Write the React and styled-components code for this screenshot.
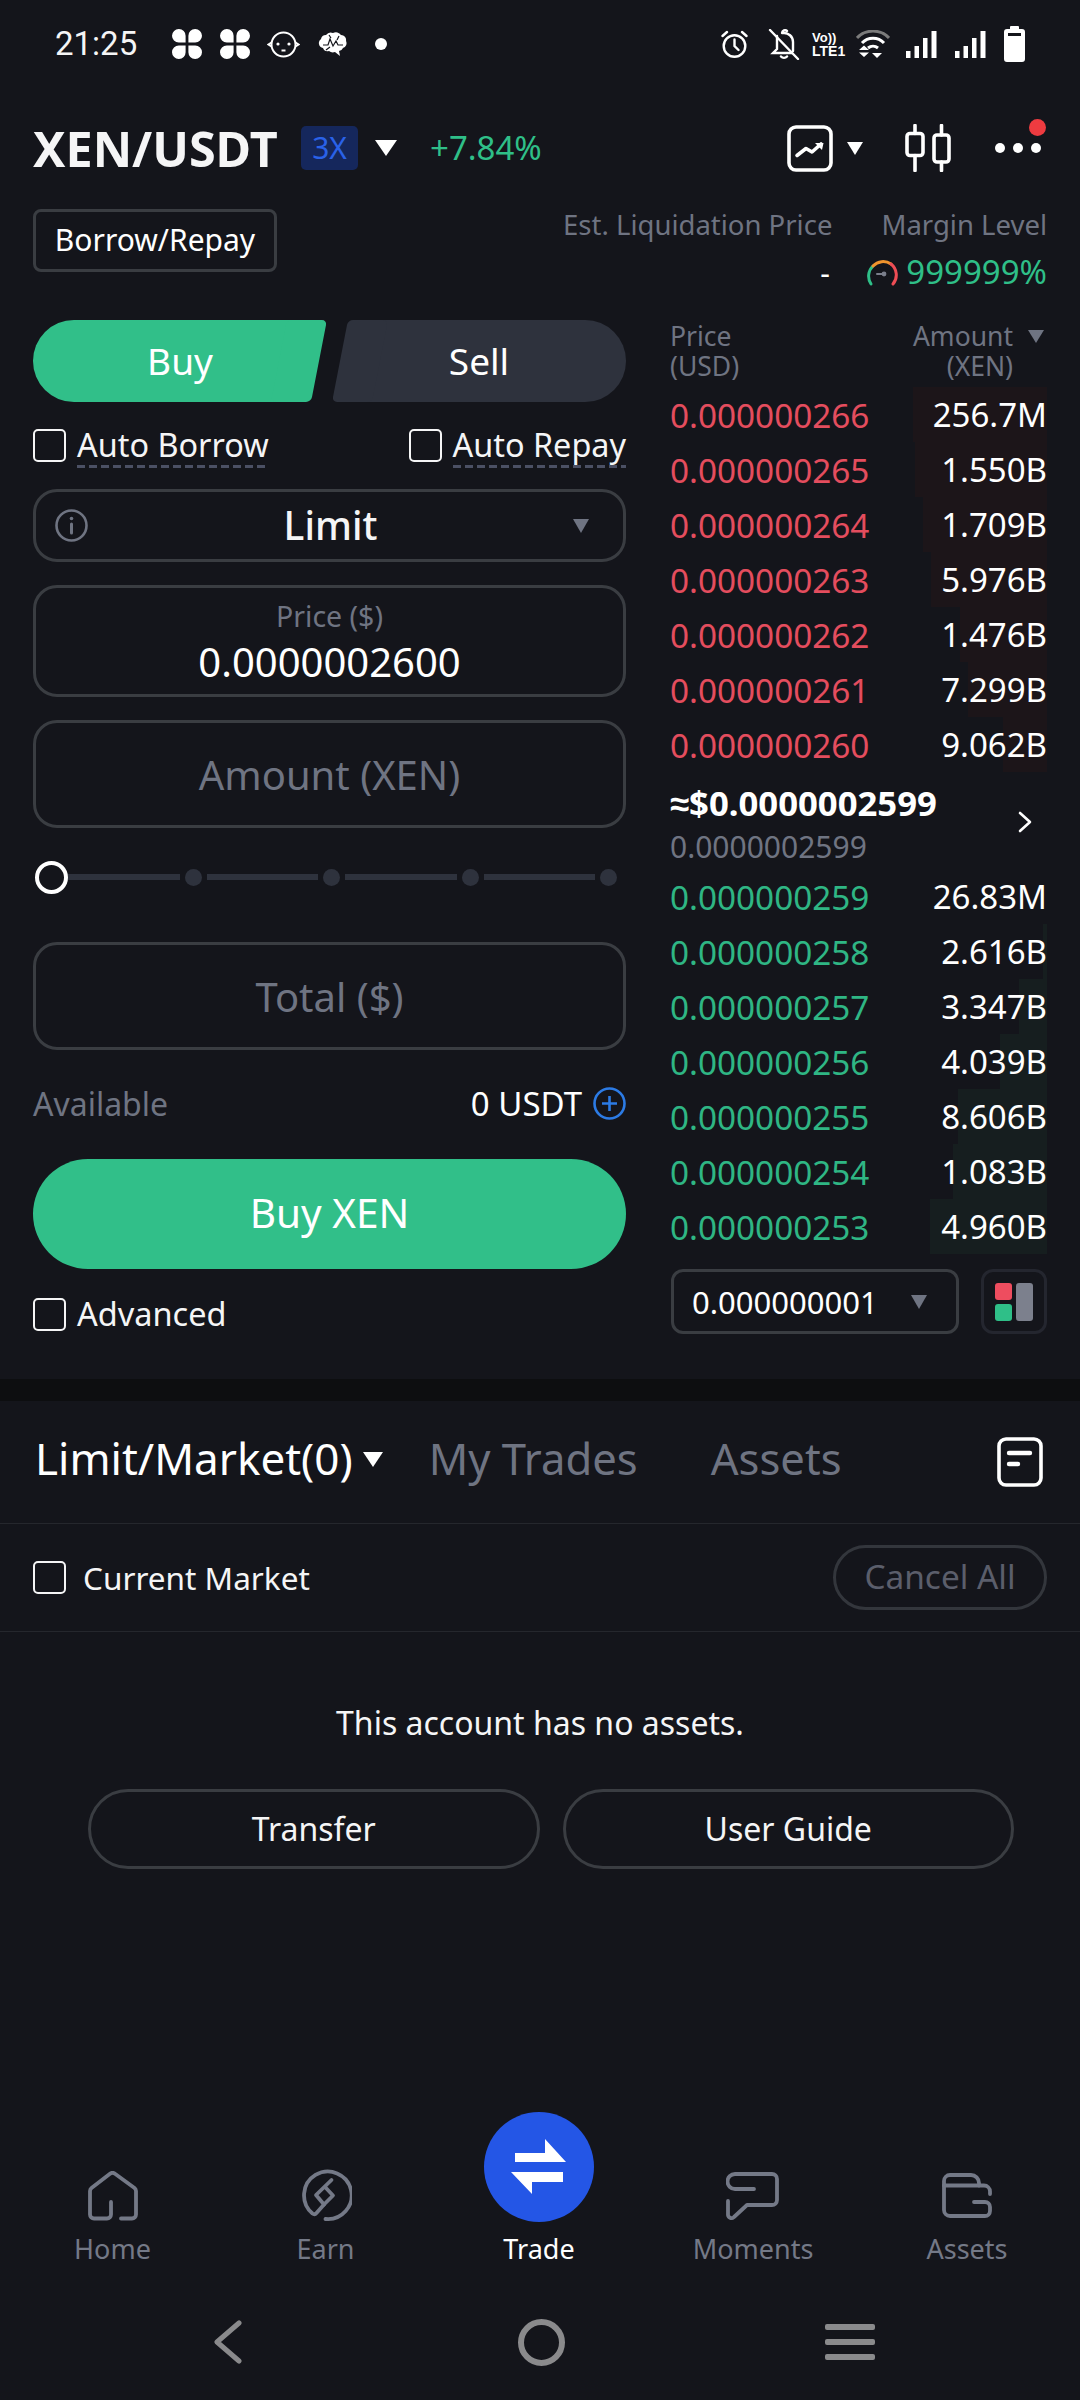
import styled, { createGlobalStyle } from "styled-components";

const GlobalStyle = createGlobalStyle`
  html, body {
    margin: 0;
    padding: 0;
    background: #14151b;
  }
  * {
    box-sizing: border-box;
  }
`;

const asks = [
  { price: "0.000000266", amount: "256.7M", depth: 134 },
  { price: "0.000000265", amount: "1.550B", depth: 132 },
  { price: "0.000000264", amount: "1.709B", depth: 124 },
  { price: "0.000000263", amount: "5.976B", depth: 116 },
  { price: "0.000000262", amount: "1.476B", depth: 87 },
  { price: "0.000000261", amount: "7.299B", depth: 79 },
  { price: "0.000000260", amount: "9.062B", depth: 44 },
];

const bids = [
  { price: "0.000000259", amount: "26.83M", depth: 0 },
  { price: "0.000000258", amount: "2.616B", depth: 4 },
  { price: "0.000000257", amount: "3.347B", depth: 28 },
  { price: "0.000000256", amount: "4.039B", depth: 47 },
  { price: "0.000000255", amount: "8.606B", depth: 89 },
  { price: "0.000000254", amount: "1.083B", depth: 94 },
  { price: "0.000000253", amount: "4.960B", depth: 117 },
];

function Clover() {
  return (
    <svg width="30" height="30" viewBox="0 0 30 30" fill="#fff">
      <path d="M13.6 13.6 V7 a6.8 6.8 0 1 0 -6.8 6.6 Z" />
      <path d="M16.4 13.6 V7 a6.8 6.8 0 1 1 6.8 6.6 Z" />
      <path d="M13.6 16.4 V23 a6.8 6.8 0 1 1 -6.8 -6.6 Z" />
      <path d="M16.4 16.4 V23 a6.8 6.8 0 1 0 6.8 -6.6 Z" />
    </svg>
  );
}

function Baby() {
  return (
    <svg width="33" height="27" viewBox="0 0 33 27" fill="none" stroke="#fff" strokeWidth="2">
      <circle cx="16.5" cy="13.5" r="12" />
      <path d="M4.5 11.5 L1.5 13.5 L4.5 15.5 M28.5 11.5 L31.5 13.5 L28.5 15.5" />
      <circle cx="11" cy="13" r="1.6" fill="#fff" stroke="none" />
      <circle cx="22" cy="13" r="1.6" fill="#fff" stroke="none" />
      <path d="M14.5 19.5 H18.5" />
    </svg>
  );
}

function Brain() {
  return (
    <svg width="29" height="25" viewBox="0 0 29 25">
      <path
        fill="#fff"
        d="M3 7 a5 5 0 0 1 5 -4 a6 6 0 0 1 7 -2 a6 6 0 0 1 8 2 a5 5 0 0 1 5 6 a5 5 0 0 1 -3 7 a5 5 0 0 1 -4 3 l1 5 l-5 -4 a6 6 0 0 1 -6 -1 a5 5 0 0 1 -6 -3 a5 5 0 0 1 -2 -9 Z"
      />
      <path
        fill="none"
        stroke="#14151b"
        strokeWidth="1.2"
        d="M5 13 H10 L12 7 L15 14 L18 9 L20 13 H25 M11 3 L13 6 M21 4 L19 8 M8 18 L12 15"
      />
    </svg>
  );
}

function Alarm() {
  return (
    <svg width="27" height="28" viewBox="0 0 27 28" fill="none" stroke="#fff" strokeWidth="2.4" strokeLinecap="round">
      <circle cx="13.5" cy="16" r="10.8" />
      <path d="M13.5 9.5 V16 L17.5 20 M1.5 6 L6 2 M25.5 6 L21 2" />
    </svg>
  );
}

function BellOff() {
  return (
    <svg width="32" height="31" viewBox="0 0 32 31" fill="none" stroke="#fff" strokeWidth="2.4" strokeLinecap="round">
      <path d="M2 1 L30 30" />
      <path d="M9 7 V20 L5 24 H24 M15 4 a9 9 0 0 1 10 9 V22 M13 27.5 a4 4 0 0 0 6 0 M14 4 a3 3 0 0 1 5 -2" />
    </svg>
  );
}

function Wifi() {
  return (
    <svg width="34" height="28" viewBox="0 0 34 28" fill="none" strokeLinecap="butt">
      <path d="M1 8 A22 22 0 0 1 33 8" stroke="#7b7b7b" strokeWidth="3" />
      <path d="M6 13 A15 15 0 0 1 28 13" stroke="#fff" strokeWidth="3" />
      <path d="M12 18 A8 8 0 0 1 22 18" stroke="#fff" strokeWidth="3" />
      <path d="M3 20 L8 15.5 L13 20 Z M3 22.5 L8 27 L13 22.5 Z" fill="#fff" />
      <path d="M16 23 H26 L21 28 Z" fill="#fff" />
    </svg>
  );
}

function Signal() {
  return (
    <svg width="31" height="27" viewBox="0 0 31 27" fill="#fff">
      <rect x="0" y="20" width="4.5" height="7" />
      <rect x="8.5" y="15" width="4.5" height="12" />
      <rect x="17" y="7" width="4.5" height="20" />
      <rect x="25.5" y="0" width="5" height="27" />
    </svg>
  );
}

function Battery() {
  return (
    <svg width="21" height="36" viewBox="0 0 21 36" fill="#fff">
      <rect x="6" y="0" width="9" height="4" rx="1" />
      <path d="M3 3 H18 a3 3 0 0 1 3 3 V33 a3 3 0 0 1 -3 3 H3 a3 3 0 0 1 -3 -3 V6 a3 3 0 0 1 3 -3 Z M4 7 V10 H17 V7 Z" fillRule="evenodd" />
    </svg>
  );
}

function ChartIcon() {
  return (
    <svg width="46" height="47" viewBox="0 0 46 47" fill="none" stroke="#fff" strokeLinecap="round" strokeLinejoin="round">
      <rect x="2" y="2" width="42" height="43" rx="7" strokeWidth="3.6" />
      <path d="M10 30.5 L19 23.5 L25 27 L34 19" strokeWidth="3.6" />
      <path d="M28 18 H36.5 L35 25 Z" fill="#fff" stroke="none" />
    </svg>
  );
}

function CandleIcon() {
  return (
    <svg width="48" height="48" viewBox="0 0 48 48" fill="none" stroke="#fff" strokeWidth="3.6" strokeLinecap="round">
      <rect x="3" y="9.5" width="16" height="22" rx="3" />
      <path d="M11 1.5 V9.5 M11 31.5 V46.5" />
      <rect x="30" y="11" width="15" height="27" rx="3" />
      <path d="M37.5 1.5 V11 M37.5 38 V46.5" />
    </svg>
  );
}

function Gauge() {
  return (
    <svg width="33" height="28" viewBox="0 0 33 28" fill="none" strokeWidth="3" strokeLinecap="round">
      <path d="M5 26 A14 14 0 0 1 7 8" stroke="#2fbf88" />
      <path d="M7 8 A14 14 0 0 1 25 6" stroke="#f0942d" />
      <path d="M25 6 A14 14 0 0 1 27 26" stroke="#ee4d55" />
      <path d="M11 16 H16" stroke="#7a7e8b" strokeWidth="2" />
      <circle cx="18" cy="16" r="2.4" fill="#7a7e8b" stroke="none" />
    </svg>
  );
}

function InfoIcon() {
  return (
    <svg width="33" height="33" viewBox="0 0 33 33" fill="none" stroke="#6f7482" strokeWidth="2.6" strokeLinecap="round">
      <circle cx="16.5" cy="16.5" r="15" />
      <path d="M16.5 15 V24" strokeWidth="3" />
      <circle cx="16.5" cy="9.5" r="1.8" fill="#6f7482" stroke="none" />
    </svg>
  );
}

function PlusIcon() {
  return (
    <svg width="33" height="33" viewBox="0 0 33 33" fill="none" stroke="#2c7be5" strokeWidth="2.6">
      <circle cx="16.5" cy="16.5" r="15" />
      <path d="M9 16.5 H24 M16.5 9 V24" />
    </svg>
  );
}

function ChevronIcon() {
  return (
    <svg width="14" height="22" viewBox="0 0 14 22" fill="none" stroke="#fff" strokeWidth="2.6" strokeLinecap="round" strokeLinejoin="round">
      <path d="M2 2 L12 11 L2 20" />
    </svg>
  );
}

function OrdersIcon() {
  return (
    <svg width="46" height="50" viewBox="0 0 46 50" fill="none" stroke="#fff" strokeLinecap="round">
      <rect x="2" y="2" width="42" height="46" rx="7" strokeWidth="3.6" />
      <path d="M12 16 H33" strokeWidth="4.4" />
      <path d="M12 27 H21" strokeWidth="4.4" />
    </svg>
  );
}

function HomeIcon() {
  return (
    <svg width="50" height="50" viewBox="0 0 50 50" fill="none" stroke="#747987" strokeWidth="3.8" strokeLinecap="round" strokeLinejoin="round">
      <path d="M33 47.5 H44 a4 4 0 0 0 4 -4 V20 a4 4 0 0 0 -1.5 -3 L27 2.8 a4 4 0 0 0 -5 0 L3.5 17 a4 4 0 0 0 -1.5 3 V43.5 a4 4 0 0 0 4 4 H19 a4 4 0 0 0 4 -4 V31" />
    </svg>
  );
}

function EarnIcon() {
  return (
    <svg width="52" height="53" viewBox="0 0 52 53" fill="none" stroke="#747987" strokeWidth="3.8" strokeLinecap="round" strokeLinejoin="round">
      <path d="M31.5 11 L16 26 L24 35.5 L33 26.5 L25.5 18.5" />
      <path d="M24 35.5 L16.5 44 a3 3 0 0 1 -4 0.5 A23.8 23.8 0 1 1 25.5 50" />
    </svg>
  );
}

function MomentsIcon() {
  return (
    <svg width="54" height="48" viewBox="0 0 54 48" fill="none" stroke="#747987" strokeWidth="3.8" strokeLinecap="round" strokeLinejoin="round">
      <path d="M28 17 H9 a7.5 7.5 0 0 1 0 -15 H46 a5 5 0 0 1 5 5 V28 a5 5 0 0 1 -5 5 H21 L8 45 a3.5 3.5 0 0 1 -6 -2 V29" />
    </svg>
  );
}

function AssetsIcon() {
  return (
    <svg width="50" height="45" viewBox="0 0 50 45" fill="none" stroke="#747987" strokeWidth="3.8" strokeLinecap="round" strokeLinejoin="round">
      <path d="M2 12.5 H42 a6 6 0 0 1 6 6 V21" />
      <path d="M37 12.5 V10 a8 8 0 0 0 -8 -8 H8 a6 6 0 0 0 -6 6 V37 a6 6 0 0 0 6 6 H43 a5 5 0 0 0 5 -5 V34 a5 5 0 0 0 -5 -5 H32" />
    </svg>
  );
}

function TradeArrows() {
  return (
    <svg width="110" height="110" viewBox="0 0 110 110" fill="#fff">
      <path d="M61 27 L82 50 H31 V41 H61 Z" />
      <path d="M79 60 H27 L48 82 V70 H79 Z" />
    </svg>
  );
}

function BackIcon() {
  return (
    <svg width="30" height="44" viewBox="0 0 30 44" fill="none" stroke="#8a8a8c" strokeWidth="5" strokeLinecap="round" strokeLinejoin="round">
      <path d="M26 3 L4 22 L26 41" />
    </svg>
  );
}

function OrderRow({ row, side }) {
  return (
    <BookRow>
      {row.depth > 0 && <DepthBar $side={side} style={{ width: row.depth }} />}
      <BookPrice $side={side}>{row.price}</BookPrice>
      <BookAmount>{row.amount}</BookAmount>
    </BookRow>
  );
}

function TabItem({ icon, label }) {
  return (
    <NavItem>
      <NavIconBox>{icon}</NavIconBox>
      <NavLabel>{label}</NavLabel>
    </NavItem>
  );
}

export default function App() {
  return (
    <>
      <GlobalStyle />
      <Page>
        <StatusBar>
          <StatusLeft>
            <Time>21:25</Time>
            <StatusSlot $gap={37}><Clover /></StatusSlot>
            <StatusSlot $gap={18}><Clover /></StatusSlot>
            <StatusSlot $gap={17}><Baby /></StatusSlot>
            <StatusSlot $gap={18}><Brain /></StatusSlot>
            <StatusDot />
          </StatusLeft>
          <StatusRight>
            <StatusSlot><Alarm /></StatusSlot>
            <StatusSlot $gap={20}><BellOff /></StatusSlot>
            <VoLte $gap={12}>
              <VoLine>Vo))</VoLine>
              <LteLine>LTE1</LteLine>
            </VoLte>
            <StatusSlot $gap={10}><Wifi /></StatusSlot>
            <StatusSlot $gap={16}><Signal /></StatusSlot>
            <StatusSlot $gap={18}><Signal /></StatusSlot>
            <StatusSlot $gap={18}><Battery /></StatusSlot>
          </StatusRight>
        </StatusBar>

        <Header>
          <Pair>XEN/USDT</Pair>
          <Leverage>3X</Leverage>
          <HeaderCaret />
          <Change>+7.84%</Change>
          <HeaderTools>
            <ChartIcon />
            <ToolCaret />
            <CandleSlot><CandleIcon /></CandleSlot>
            <MoreButton>
              <MoreDot />
              <MoreDot />
              <MoreDot />
              <Notice />
            </MoreButton>
          </HeaderTools>
        </Header>

        <MarginRow>
          <BorrowButton>Borrow/Repay</BorrowButton>
          <MarginStats>
            <StatLabels>
              <StatLabel>Est. Liquidation Price</StatLabel>
              <StatLabel>Margin Level</StatLabel>
            </StatLabels>
            <StatValues>
              <LiquidationValue>-</LiquidationValue>
              <Gauge />
              <MarginValue>999999%</MarginValue>
            </StatValues>
          </MarginStats>
        </MarginRow>

        <Trading>
          <FormColumn>
            <SideTabs>
              <BuyTab>Buy</BuyTab>
              <SellTab>Sell</SellTab>
            </SideTabs>
            <AutoRow>
              <CheckLabel>
                <CheckBox />
                <DashedText>Auto Borrow</DashedText>
              </CheckLabel>
              <CheckLabel>
                <CheckBox />
                <DashedText>Auto Repay</DashedText>
              </CheckLabel>
            </AutoRow>
            <OrderType>
              <InfoIcon />
              <OrderTypeText>Limit</OrderTypeText>
              <SelectCaret />
            </OrderType>
            <PriceField>
              <FieldLabel>Price ($)</FieldLabel>
              <FieldValue>0.0000002600</FieldValue>
            </PriceField>
            <GhostField $top={23}>Amount (XEN)</GhostField>
            <Slider>
              <SliderThumb />
              <SliderTrack />
              <SliderStop />
              <SliderTrack />
              <SliderStop />
              <SliderTrack />
              <SliderStop />
              <SliderTrack />
              <SliderStop />
            </Slider>
            <GhostField $top={48}>Total ($)</GhostField>
            <AvailableRow>
              <AvailableLabel>Available</AvailableLabel>
              <AvailableValue>
                0 USDT
                <PlusIcon />
              </AvailableValue>
            </AvailableRow>
            <SubmitButton>Buy XEN</SubmitButton>
            <AdvancedRow>
              <CheckBox />
              <AdvancedText>Advanced</AdvancedText>
            </AdvancedRow>
          </FormColumn>

          <BookColumn>
            <BookHead>
              <HeadCell>
                Price
                <br />
                (USD)
              </HeadCell>
              <HeadCellRight>
                <HeadText>
                  Amount
                  <br />
                  (XEN)
                </HeadText>
                <HeadCaret />
              </HeadCellRight>
            </BookHead>
            {asks.map((row) => (
              <OrderRow key={row.price} row={row} side="ask" />
            ))}
            <MidPrice>
              <div>
                <MidMain>≈$0.0000002599</MidMain>
                <MidSub>0.0000002599</MidSub>
              </div>
              <MidChevron><ChevronIcon /></MidChevron>
            </MidPrice>
            {bids.map((row) => (
              <OrderRow key={row.price} row={row} side="bid" />
            ))}
            <BookFoot>
              <StepSelect>
                <span>0.000000001</span>
                <SelectCaret />
              </StepSelect>
              <LayoutButton>
                <LayoutStack>
                  <LayoutSquare $color="#ee4d5f" />
                  <LayoutSquare $color="#2fbf88" />
                </LayoutStack>
                <LayoutBar />
              </LayoutButton>
            </BookFoot>
          </BookColumn>
        </Trading>

        <Band />

        <OrderTabs>
          <ActiveTab>Limit/Market(0)</ActiveTab>
          <TabCaret />
          <IdleTab $left={46}>My Trades</IdleTab>
          <IdleTab $left={73}>Assets</IdleTab>
          <OrdersSlot><OrdersIcon /></OrdersSlot>
        </OrderTabs>

        <FilterRow>
          <FilterLabel>
            <CheckBox />
            <FilterText>Current Market</FilterText>
          </FilterLabel>
          <CancelAll>Cancel All</CancelAll>
        </FilterRow>

        <EmptyText>This account has no assets.</EmptyText>
        <EmptyActions>
          <OutlineButton>Transfer</OutlineButton>
          <OutlineButton>User Guide</OutlineButton>
        </EmptyActions>

        <TabBar>
          <TabItem icon={<HomeIcon />} label="Home" />
          <TabItem icon={<EarnIcon />} label="Earn" />
          <NavItem>
            <TradeCircle><TradeArrows /></TradeCircle>
            <NavLabel $active>Trade</NavLabel>
          </NavItem>
          <TabItem icon={<MomentsIcon />} label="Moments" />
          <TabItem icon={<AssetsIcon />} label="Assets" />
        </TabBar>

        <SystemNav>
          <BackIcon />
          <HomeRing />
          <MenuBars>
            <MenuBar />
            <MenuBar />
            <MenuBar />
          </MenuBars>
        </SystemNav>
      </Page>
    </>
  );
}

const Page = styled.div`
  width: 1080px;
  height: 2400px;
  overflow: hidden;
  display: flex;
  flex-direction: column;
  background: #14151b;
  color: #f5f5f6;
  font-family: "Noto Sans", "Liberation Sans", sans-serif;
`;

const StatusBar = styled.div`
  height: 88px;
  padding: 0 55px;
  display: flex;
  align-items: center;
  justify-content: space-between;
`;

const StatusLeft = styled.div`
  display: flex;
  align-items: center;
`;

const StatusRight = styled.div`
  display: flex;
  align-items: center;
`;

const Time = styled.span`
  font-family: Roboto, sans-serif;
  font-size: 33px;
  line-height: 40px;
  width: 80px;
`;

const StatusSlot = styled.span`
  display: flex;
  margin-left: ${(p) => p.$gap || 0}px;
`;

const StatusDot = styled.span`
  width: 12px;
  height: 12px;
  margin-left: 28px;
  border-radius: 50%;
  background: #fff;
`;

const VoLte = styled.span`
  width: 34px;
  margin-left: ${(p) => p.$gap}px;
  display: flex;
  flex-direction: column;
  font-family: "Liberation Sans", sans-serif;
  font-weight: 700;
  color: #fff;
`;

const VoLine = styled.span`
  font-size: 13px;
  line-height: 13px;
`;

const LteLine = styled.span`
  font-size: 14px;
  line-height: 14px;
`;

const Header = styled.div`
  height: 118px;
  padding: 2px 39px 0 33px;
  display: flex;
  align-items: center;
`;

const Pair = styled.div`
  font-size: 48.5px;
  font-weight: 700;
  line-height: 60px;
  width: 268px;
`;

const Leverage = styled.div`
  width: 57px;
  height: 44px;
  border-radius: 5px;
  background: #15275c;
  color: #2a62e8;
  font-size: 30px;
  line-height: 44px;
  text-align: center;
`;

const Triangle = styled.span`
  width: 0;
  height: 0;
  border-left: ${(p) => p.$w / 2}px solid transparent;
  border-right: ${(p) => p.$w / 2}px solid transparent;
  border-top: ${(p) => p.$h}px solid ${(p) => p.$color};
`;

const HeaderCaret = styled(Triangle).attrs({ $w: 22, $h: 16, $color: "#fff" })`
  margin-left: 17px;
`;

const Change = styled.div`
  margin-left: 33px;
  color: #2fbf88;
  font-size: 33px;
  line-height: 40px;
`;

const HeaderTools = styled.div`
  margin-left: auto;
  display: flex;
  align-items: center;
`;

const ToolCaret = styled(Triangle).attrs({ $w: 16, $h: 13, $color: "#fff" })`
  margin-left: 14px;
`;

const CandleSlot = styled.span`
  display: flex;
  margin-left: 41px;
`;

const MoreButton = styled.div`
  position: relative;
  width: 46px;
  height: 48px;
  margin-left: 43px;
  display: flex;
  align-items: center;
  justify-content: space-between;
`;

const MoreDot = styled.span`
  width: 10px;
  height: 10px;
  border-radius: 50%;
  background: #fff;
`;

const Notice = styled.span`
  position: absolute;
  top: -5px;
  right: -5px;
  width: 17px;
  height: 17px;
  border-radius: 50%;
  background: #ee3b40;
`;

const MarginRow = styled.div`
  height: 114px;
  padding: 0 33px;
  display: flex;
  justify-content: space-between;
  align-items: flex-start;
`;

const BorrowButton = styled.div`
  width: 244px;
  height: 63px;
  margin-top: 3px;
  border: 3px solid #3a3d42;
  border-radius: 8px;
  color: #fff;
  font-size: 30px;
  line-height: 56px;
  text-align: center;
`;

const MarginStats = styled.div`
  display: flex;
  flex-direction: column;
  align-items: flex-end;
`;

const StatLabels = styled.div`
  margin-top: 1px;
  display: flex;
  gap: 49px;
`;

const StatLabel = styled.span`
  color: #6f7482;
  font-size: 27.5px;
  line-height: 36px;
`;

const StatValues = styled.div`
  margin-top: 9px;
  display: flex;
  align-items: center;
  height: 40px;
`;

const LiquidationValue = styled.span`
  width: 46px;
  font-size: 30px;
  color: #fff;
`;

const MarginValue = styled.span`
  margin-left: 7px;
  color: #2fbf88;
  font-size: 33px;
  line-height: 40px;
`;

const Trading = styled.div`
  height: 1059px;
  padding: 0 33px;
  display: grid;
  grid-template-columns: 593px 376px;
  column-gap: 45px;
`;

const FormColumn = styled.div`
  display: flex;
  flex-direction: column;
`;

const SideTabs = styled.div`
  height: 82px;
  display: flex;
  justify-content: space-between;
`;

const sideTab = `
  position: relative;
  width: 286px;
  height: 82px;
  font-size: 37px;
  line-height: 82px;
  text-align: center;
  color: #fff;
  &::after {
    content: "";
    position: absolute;
    top: 0;
    bottom: 0;
    width: 40px;
    transform: skewX(-11deg);
    border-radius: 5px;
  }
`;

const BuyTab = styled.div`
  ${sideTab}
  background: linear-gradient(#31bf89, #31bf89) no-repeat left / calc(100% - 16px) 100%;
  border-radius: 41px 0 0 41px;
  padding-left: 8px;
  &::after {
    right: 0;
    background: #31bf89;
  }
`;

const SellTab = styled.div`
  ${sideTab}
  background: linear-gradient(#2e323d, #2e323d) no-repeat right / calc(100% - 16px) 100%;
  border-radius: 0 41px 41px 0;
  padding-right: 8px;
  &::after {
    left: 0;
    background: #2e323d;
  }
`;

const AutoRow = styled.div`
  margin-top: 23px;
  height: 40px;
  display: flex;
  justify-content: space-between;
  align-items: center;
`;

const CheckLabel = styled.div`
  display: flex;
  align-items: center;
  gap: 11px;
`;

const CheckBox = styled.span`
  flex: none;
  width: 33px;
  height: 33px;
  border: 2px solid #f5f5f6;
  border-radius: 5px;
`;

const DashedText = styled.span`
  font-size: 32.4px;
  line-height: 44px;
  padding-bottom: 2px;
  color: #f5f5f6;
  background-image: repeating-linear-gradient(90deg, #4b5064 0 8px, transparent 8px 12px);
  background-size: 100% 3px;
  background-repeat: no-repeat;
  background-position: bottom;
`;

const fieldBox = `
  width: 593px;
  border: 3px solid #3a3d42;
  border-radius: 24px;
`;

const OrderType = styled.div`
  ${fieldBox}
  position: relative;
  height: 73px;
  margin-top: 24px;
  padding: 0 34px 0 19px;
  display: flex;
  align-items: center;
  justify-content: space-between;
`;

const OrderTypeText = styled.span`
  margin-bottom: 2px;
  font-size: 39px;
  line-height: 50px;
  font-weight: 500;
`;

const SelectCaret = styled(Triangle).attrs({ $w: 17, $h: 14, $color: "#6f7482" })``;

const PriceField = styled.div`
  ${fieldBox}
  height: 112px;
  margin-top: 23px;
  display: flex;
  flex-direction: column;
  align-items: center;
  padding-top: 10px;
`;

const FieldLabel = styled.span`
  color: #6f7482;
  font-size: 28.5px;
  line-height: 36px;
`;

const FieldValue = styled.span`
  margin-top: 5px;
  font-size: 40px;
  line-height: 46px;
  color: #fff;
`;

const GhostField = styled.div`
  ${fieldBox}
  height: 108px;
  margin-top: ${(p) => p.$top}px;
  color: #6f7482;
  font-size: 40px;
  line-height: 103px;
  text-align: center;
`;

const Slider = styled.div`
  height: 34px;
  margin-top: 32px;
  padding: 0 9px 0 2px;
  display: flex;
  align-items: center;
`;

const SliderThumb = styled.span`
  flex: none;
  width: 33px;
  height: 33px;
  border: 4px solid #fff;
  border-radius: 50%;
`;

const SliderTrack = styled.span`
  flex: 1;
  height: 6px;
  background: #2e323d;
`;

const SliderStop = styled.span`
  flex: none;
  width: 17px;
  height: 17px;
  margin: 0 5px;
  border-radius: 50%;
  background: #2e323d;
  &:last-child {
    margin-right: 0;
  }
`;

const AvailableRow = styled.div`
  margin-top: 33px;
  height: 40px;
  display: flex;
  justify-content: space-between;
  align-items: center;
`;

const AvailableLabel = styled.span`
  color: #6f7482;
  font-size: 32px;
`;

const AvailableValue = styled.span`
  display: flex;
  align-items: center;
  gap: 11px;
  font-size: 33px;
  color: #fff;
`;

const SubmitButton = styled.div`
  height: 110px;
  margin-top: 36px;
  border-radius: 55px;
  background: #31bf89;
  color: #fff;
  font-size: 40.5px;
  line-height: 108px;
  text-align: center;
`;

const AdvancedRow = styled.div`
  margin-top: 27px;
  display: flex;
  align-items: center;
  gap: 11px;
`;

const AdvancedText = styled.span`
  font-size: 32.5px;
  line-height: 36px;
  color: #f5f5f6;
`;

const BookColumn = styled.div`
  display: flex;
  flex-direction: column;
`;

const BookHead = styled.div`
  height: 67px;
  padding-top: 1px;
  display: flex;
  justify-content: space-between;
  color: #6f7482;
  font-size: 26.5px;
  line-height: 30px;
`;

const HeadCell = styled.div`
  margin-left: -1px;
`;

const HeadCellRight = styled.div`
  display: flex;
  align-items: flex-start;
  gap: 15px;
  padding-right: 3px;
`;

const HeadText = styled.div`
  text-align: right;
`;

const HeadCaret = styled(Triangle).attrs({ $w: 16, $h: 13, $color: "#6f7482" })`
  margin-top: 9px;
`;

const BookRow = styled.div`
  position: relative;
  height: 55px;
  display: flex;
  align-items: center;
  justify-content: space-between;
`;

const DepthBar = styled.span`
  position: absolute;
  top: 0;
  bottom: 0;
  right: 0;
  background: ${(p) => (p.$side === "ask" ? "#1c1519" : "#161e1f")};
`;

const BookPrice = styled.span`
  position: relative;
  margin-left: -1px;
  font-size: 33.3px;
  line-height: 40px;
  color: ${(p) => (p.$side === "ask" ? "#e44d5e" : "#2fb684")};
`;

const BookAmount = styled.span`
  position: relative;
  font-size: 33px;
  line-height: 40px;
  color: #fff;
`;

const MidPrice = styled.div`
  height: 97px;
  padding-top: 6px;
  display: flex;
  justify-content: space-between;
  align-items: center;
`;

const MidMain = styled.div`
  margin-left: -1px;
  font-size: 34.7px;
  font-weight: 700;
  line-height: 44px;
  color: #fff;
`;

const MidSub = styled.div`
  margin-top: 3px;
  margin-left: -1px;
  font-size: 30px;
  line-height: 38px;
  color: #6f7482;
`;

const MidChevron = styled.span`
  display: flex;
  margin: -4px 15px 0 0;
`;

const BookFoot = styled.div`
  margin-top: 15px;
  display: flex;
  justify-content: space-between;
`;

const StepSelect = styled.div`
  width: 288px;
  height: 65px;
  padding: 0 29px 0 18px;
  border: 3px solid #3a3d42;
  border-radius: 12px;
  display: flex;
  align-items: center;
  justify-content: space-between;
  font-size: 31px;
  color: #fff;
`;

const LayoutButton = styled.div`
  width: 66px;
  height: 65px;
  border: 3px solid #24262f;
  border-radius: 12px;
  display: flex;
  align-items: center;
  justify-content: center;
  gap: 4px;
`;

const LayoutStack = styled.div`
  display: flex;
  flex-direction: column;
  gap: 4px;
`;

const LayoutSquare = styled.span`
  width: 17px;
  height: 17px;
  border-radius: 3px;
  background: ${(p) => p.$color};
`;

const LayoutBar = styled.span`
  width: 17px;
  height: 38px;
  border-radius: 3px;
  background: #7c808d;
`;

const Band = styled.div`
  height: 22px;
  background: #0d0e10;
`;

const OrderTabs = styled.div`
  height: 123px;
  padding: 0 37px 0 35px;
  display: flex;
  align-items: center;
  border-bottom: 1px solid #25272d;
`;

const ActiveTab = styled.span`
  margin-bottom: 8px;
  font-size: 44px;
  line-height: 56px;
  color: #fff;
`;

const TabCaret = styled(Triangle).attrs({ $w: 20, $h: 15, $color: "#fff" })`
  margin: 0 0 6px 10px;
`;

const IdleTab = styled.span`
  margin: 0 0 8px ${(p) => p.$left}px;
  font-size: 43.6px;
  line-height: 56px;
  color: #6f7482;
`;

const OrdersSlot = styled.span`
  display: flex;
  margin-left: auto;
`;

const FilterRow = styled.div`
  height: 108px;
  padding: 0 33px;
  display: flex;
  align-items: center;
  justify-content: space-between;
  border-bottom: 1px solid #25272d;
`;

const FilterLabel = styled.div`
  display: flex;
  align-items: center;
  gap: 17px;
`;

const FilterText = styled.span`
  font-size: 31.5px;
  color: #f5f5f6;
`;

const CancelAll = styled.div`
  width: 214px;
  height: 65px;
  border: 3px solid #33363c;
  border-radius: 33px;
  color: #5b5e6b;
  font-size: 33.4px;
  line-height: 57px;
  text-align: center;
`;

const EmptyText = styled.div`
  margin-top: 70px;
  text-align: center;
  font-size: 32px;
  line-height: 42px;
  color: #f5f5f6;
`;

const EmptyActions = styled.div`
  margin-top: 45px;
  padding: 0 66px 0 88px;
  display: flex;
  gap: 23px;
`;

const OutlineButton = styled.div`
  flex: 1;
  height: 80px;
  border: 3px solid #3a3d42;
  border-radius: 40px;
  color: #f5f5f6;
  font-size: 32px;
  line-height: 74px;
  text-align: center;
`;

const TabBar = styled.div`
  margin-top: auto;
  padding: 0 6px 17px;
  display: grid;
  grid-template-columns: 213px 213px 214px 214px 214px;
  align-items: end;
`;

const NavItem = styled.div`
  display: flex;
  flex-direction: column;
  align-items: center;
`;

const NavIconBox = styled.div`
  height: 53px;
  display: flex;
  align-items: center;
  justify-content: center;
`;

const TradeCircle = styled.div`
  width: 110px;
  height: 110px;
  border-radius: 50%;
  background: #2456e6;
`;

const NavLabel = styled.span`
  margin-top: 9px;
  font-size: 27px;
  line-height: 36px;
  color: ${(p) => (p.$active ? "#fff" : "#747987")};
`;

const SystemNav = styled.div`
  height: 116px;
  padding: 0 205px 0 213px;
  display: flex;
  align-items: center;
  justify-content: space-between;
`;

const HomeRing = styled.span`
  width: 47px;
  height: 47px;
  margin-left: 14px;
  border: 6px solid #8a8a8c;
  border-radius: 50%;
`;

const MenuBars = styled.div`
  width: 50px;
  display: flex;
  flex-direction: column;
  gap: 9px;
`;

const MenuBar = styled.span`
  height: 6px;
  border-radius: 2px;
  background: #8a8a8c;
`;
